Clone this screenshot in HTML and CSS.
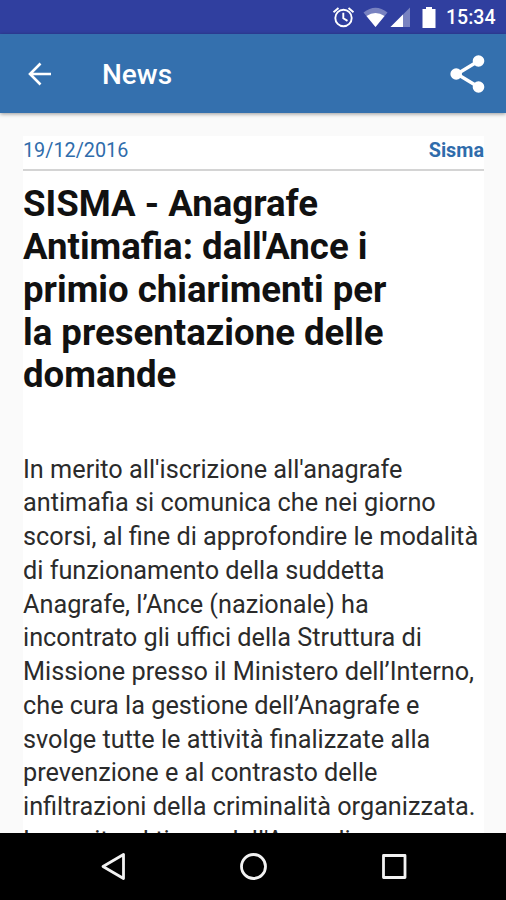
FILE: index.html
```html
<!DOCTYPE html>
<html lang="it">
<head>
    <meta charset="UTF-8">
    <meta name="viewport" content="width=device-width, initial-scale=1.0">
    <title>News</title>
    <link rel="stylesheet" href="styles.css">
</head>
<body>
    <div class="status-bar">
        <svg class="status-icons" width="120" height="34" viewBox="0 0 120 34">
            <g fill="none" stroke="#fff" stroke-width="1.9">
                <circle cx="13.5" cy="18" r="8.2"/>
                <path d="M13.3 12.8v5.5l4.2 2.6M3.5 12.3l5-4.3M18.5 8l5 4.3"/>
            </g>
            <path d="M33.5 12.5q12-9.5 24 0L45.5 27z" fill="#fff" opacity=".35"/>
            <path d="M36.5 16q9-6 18 0L45.5 27z" fill="#fff"/>
            <path d="M80 7.5V27H60.5z" fill="#fff" opacity=".35"/>
            <path d="M73 14.5V27H60.5z" fill="#fff"/>
            <path d="M96 7h6v2h3.5v19h-13V9H96z" fill="#fff"/>
        </svg>
        <span class="clock">15:34</span>
    </div>
    <header>
        <svg class="back" width="24" height="24" viewBox="0 0 24 24">
            <path d="M12.5 1.5L2 12l10.5 10.5M2.5 12H23" fill="none" stroke="#fff" stroke-width="2.6"/>
        </svg>
        <h1>News</h1>
        <svg class="share" width="36" height="40" viewBox="0 0 36 40">
            <path d="M28.5 7L7 20l21.5 13" fill="none" stroke="#fff" stroke-width="3.4"/>
            <g fill="#fff">
                <circle cx="28.5" cy="7" r="5.8"/>
                <circle cx="6.2" cy="20" r="5.8"/>
                <circle cx="28.5" cy="33" r="5.8"/>
            </g>
        </svg>
    </header>
    <main>
        <article>
            <div class="meta">
                <span>19/12/2016</span>
                <span class="category">Sisma</span>
            </div>
            <h2>SISMA - Anagrafe<br>Antimafia: dall'Ance i<br>primio chiarimenti per<br>la presentazione delle<br>domande</h2>
            <p>In merito all'iscrizione all'anagrafe<br>antimafia si comunica che nei giorno<br>scorsi, al fine di approfondire le modalità<br>di funzionamento della suddetta<br>Anagrafe, l’Ance (nazionale) ha<br>incontrato gli uffici della Struttura di<br>Missione presso il Ministero dell’Interno,<br>che cura la gestione dell’Anagrafe e<br>svolge tutte le attività finalizzate alla<br>prevenzione e al contrasto delle<br>infiltrazioni della criminalità organizzata.<br>In merito al tipo e dell'Ance di</p>
        </article>
    </main>
    <nav>
        <svg width="506" height="67" viewBox="0 0 506 67" fill="none" stroke="#f2f2f2" stroke-width="2.8" stroke-linejoin="round">
            <path d="M123.5 21.5v24l-20.5-12z"/>
            <circle cx="253.5" cy="33.5" r="12"/>
            <path d="M383.5 22.5h21.5v22h-21.5z"/>
        </svg>
    </nav>
</body>
</html>
```

FILE: styles.css
```css
body {
    margin: 0;
    height: 900px;
    display: flex;
    flex-direction: column;
    overflow: hidden;
    font-family: Roboto, sans-serif;
    background-color: #fafafa;
}
.status-bar {
    flex: none;
    height: 34px;
    display: flex;
    align-items: center;
    justify-content: flex-end;
    background-color: #303f9f;
    color: white;
    padding-right: 10px;
}
.status-icons {
    margin-right: -4px;
}
.clock {
    width: 50px;
    font-size: 19.5px;
    font-weight: 500;
    line-height: 34px;
    padding-top: 2px;
    white-space: nowrap;
}
header {
    flex: none;
    height: 79px;
    display: flex;
    align-items: center;
    box-sizing: border-box;
    padding: 0 20px 0 28px;
    background-color: #3470ae;
    color: white;
    box-shadow: 0 1px 4px rgba(0, 0, 0, 0.4);
    z-index: 1;
}
h1 {
    margin: 3px 0 0 50px;
    font-size: 28px;
    line-height: 36px;
    font-weight: 500;
}
.share {
    margin-left: auto;
}
main {
    flex: 1;
    min-height: 0;
    overflow: hidden;
    padding: 23px 22px 0 23px;
}
article {
    background-color: white;
}
.meta {
    display: flex;
    justify-content: space-between;
    height: 33px;
    line-height: 29px;
    border-bottom: 2px solid #d4d4d4;
    font-size: 19.8px;
    color: #2f6cab;
}
.category {
    font-weight: 700;
}
h2 {
    margin: 0;
    padding-top: 12.4px;
    font-size: 36.6px;
    line-height: 42.7px;
    font-weight: 700;
    color: #111;
}
p {
    margin: 0;
    padding-top: 55.7px;
    font-size: 25.28px;
    line-height: 33.75px;
    color: #2b2b2b;
    white-space: nowrap;
}
nav {
    flex: none;
    height: 67px;
    background-color: black;
    z-index: 1;
}
nav svg {
    display: block;
}
```
